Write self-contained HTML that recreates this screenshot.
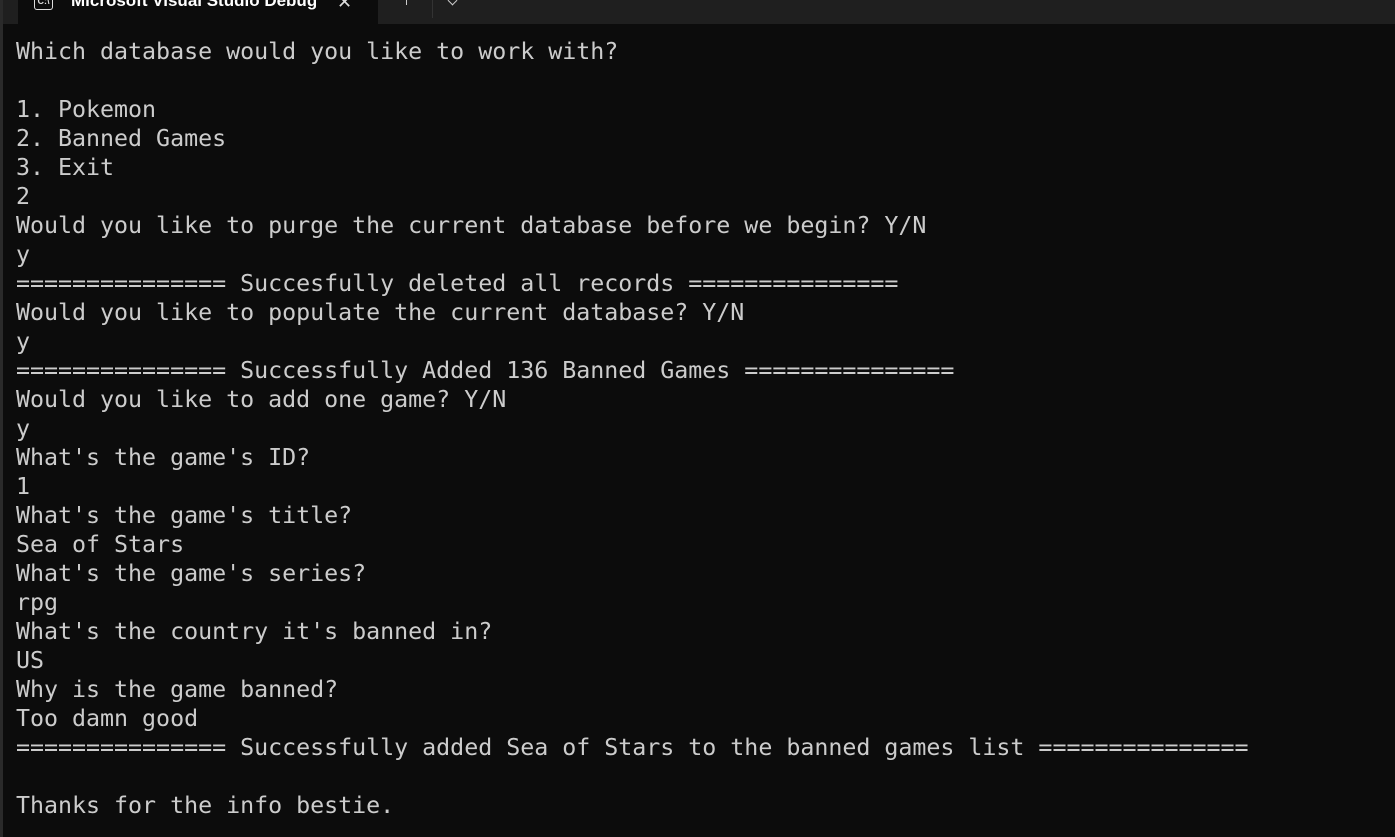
<!DOCTYPE html>
<html><head><style>
html,body{margin:0;padding:0;width:1395px;height:837px;overflow:hidden;background:#0c0c0c}
.bar{position:absolute;left:0;top:0;width:1395px;height:24px;background:#1f1f1f}
.tab{position:absolute;left:18px;top:0;width:360px;height:24px;background:#0c0c0c}
.tab span{position:absolute;left:53px;top:-9px;font:bold 17px "Liberation Sans",sans-serif;color:#fff;white-space:nowrap;width:245px;overflow:hidden}
.icon{position:absolute;left:16px;top:-4px;width:17px;height:13px;border:1.5px solid #ddd;border-top:none;border-radius:0 0 3px 3px;font:bold 9px "Liberation Sans";color:#ddd;text-align:center;line-height:10px}
.x{position:absolute;left:319px;top:-8px;color:#ddd;font:18px "Liberation Sans"}
.plus{position:absolute;left:406px;top:-2px;width:1px;height:7px;background:#ccc}
.sep{position:absolute;left:432px;top:0;width:1px;height:18px;background:#333}
.chev{position:absolute;left:449px;top:-3px;width:6px;height:6px;border-right:1.5px solid #ccc;border-bottom:1.5px solid #ccc;transform:rotate(45deg)}
.left{position:absolute;left:0;top:0;width:3px;height:837px;background:#2a2a2a}
pre{position:absolute;left:16px;top:37px;margin:0;font:23.3px/29px "DejaVu Sans Mono","Liberation Mono",monospace;color:#cccccc;letter-spacing:-0.02px}
</style></head><body>
<div class="bar"><div class="tab"><div class="icon">C:\</div><span>Microsoft Visual Studio Debug Console</span><div class="x">✕</div></div><div class="plus"></div><div class="sep"></div><div class="chev"></div></div>
<div class="left"></div>
<pre>Which database would you like to work with?

1. Pokemon
2. Banned Games
3. Exit
2
Would you like to purge the current database before we begin? Y/N
y
=============== Succesfully deleted all records ===============
Would you like to populate the current database? Y/N
y
=============== Successfully Added 136 Banned Games ===============
Would you like to add one game? Y/N
y
What's the game's ID?
1
What's the game's title?
Sea of Stars
What's the game's series?
rpg
What's the country it's banned in?
US
Why is the game banned?
Too damn good
=============== Successfully added Sea of Stars to the banned games list ===============

Thanks for the info bestie.</pre>
</body></html>
